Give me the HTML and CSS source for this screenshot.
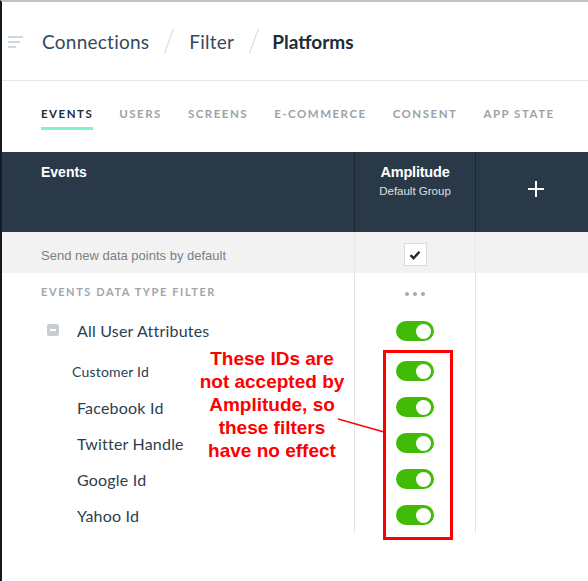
FILE: index.html
```html
<!DOCTYPE html>
<html>
<head>
<meta charset="utf-8">
<link rel="stylesheet" href="styles.css">
</head>
<body>
<div class="page">
  <header class="topbar">
    <svg class="menu" width="16" height="12" viewBox="0 0 16 12"><path d="M0 1h15M0 6h12M0 11h8" stroke="#c5cacf" stroke-width="1.6" fill="none"/></svg>
    <nav class="crumbs">
      <span class="crumb">Connections</span>
      <svg class="sep" width="10" height="26" viewBox="0 0 10 26"><path d="M9.5 0.5L0.5 25.5" stroke="#d2d6da" stroke-width="1" fill="none"/></svg>
      <span class="crumb">Filter</span>
      <svg class="sep" width="10" height="26" viewBox="0 0 10 26"><path d="M9.5 0.5L0.5 25.5" stroke="#d2d6da" stroke-width="1" fill="none"/></svg>
      <span class="crumb current">Platforms</span>
    </nav>
  </header>

  <div class="tabs">
    <span class="tab active">EVENTS</span>
    <span class="tab">USERS</span>
    <span class="tab">SCREENS</span>
    <span class="tab">E-COMMERCE</span>
    <span class="tab">CONSENT</span>
    <span class="tab">APP STATE</span>
  </div>

  <div class="table">
    <div class="row head">
      <div class="c1 head-title">Events</div>
      <div class="c2 dest">
        <div class="dest-name">Amplitude</div>
        <div class="dest-group">Default Group</div>
      </div>
      <div class="c3 add">
        <svg width="18" height="18" viewBox="0 0 18 18"><path d="M9 1v16M1 9h16" stroke="#fff" stroke-width="2" fill="none"/></svg>
      </div>
    </div>

    <div class="row defaults">
      <div class="c1 default-label">Send new data points by default</div>
      <div class="c2 center">
        <span class="checkbox"><svg width="12" height="10" viewBox="0 0 12 10"><path d="M1.5 5.2l3 3 6-6.4" stroke="#1d2b3a" stroke-width="2.4" fill="none"/></svg></span>
      </div>
      <div class="c3"></div>
    </div>

    <div class="row filter-row">
      <div class="c1 filter-label">EVENTS DATA TYPE FILTER</div>
      <div class="c2 center"><span class="dots"><i></i><i></i><i></i></span></div>
      <div class="c3"></div>
    </div>

    <div class="row attr all">
      <div class="c1 attr-name group"><span class="minus"></span>All User Attributes</div>
      <div class="c2 center"><span class="toggle"></span></div>
      <div class="c3"></div>
    </div>
    <div class="row attr">
      <div class="c1 attr-name small">Customer Id</div>
      <div class="c2 center"><span class="toggle"></span></div>
      <div class="c3"></div>
    </div>
    <div class="row attr">
      <div class="c1 attr-name">Facebook Id</div>
      <div class="c2 center"><span class="toggle"></span></div>
      <div class="c3"></div>
    </div>
    <div class="row attr">
      <div class="c1 attr-name">Twitter Handle</div>
      <div class="c2 center"><span class="toggle"></span></div>
      <div class="c3"></div>
    </div>
    <div class="row attr">
      <div class="c1 attr-name">Google Id</div>
      <div class="c2 center"><span class="toggle"></span></div>
      <div class="c3"></div>
    </div>
    <div class="row attr">
      <div class="c1 attr-name">Yahoo Id</div>
      <div class="c2 center"><span class="toggle"></span></div>
      <div class="c3"></div>
    </div>
  </div>

  <div class="note">These IDs are<br>not accepted by<br>Amplitude, so<br>these filters<br>have no effect</div>
  <svg class="pointer" width="50" height="16" viewBox="0 0 50 16"><path d="M0 1L46 14" stroke="#ff0000" stroke-width="1.5" fill="none"/></svg>
  <div class="callout"></div>
</div>
</body>
</html>
```

FILE: styles.css
```css
html, body {
  margin: 0;
  padding: 0;
  background: #fff;
}

.page {
  position: relative;
  box-sizing: border-box;
  width: 588px;
  height: 581px;
  border-top: 2px solid #c2c2c2;
  border-left: 2px solid #121a22;
  font-family: Lato, "Liberation Sans", sans-serif;
  color: #2c3e50;
  overflow: hidden;
}

.topbar {
  height: 79px;
  box-sizing: border-box;
  border-bottom: 1px solid #e6e6e6;
  display: flex;
  align-items: center;
  padding-left: 6px;
}

.menu {
  margin-right: 18px;
  margin-top: 2px;
}

.crumbs {
  display: flex;
  align-items: center;
}

.crumb {
  font-size: 19px;
  color: #34495e;
  letter-spacing: 0.25px;
}

.crumb.current {
  font-weight: 700;
  color: #1d2b3a;
  letter-spacing: 0;
}

.sep {
  margin: 0 15px;
}

.sep + .crumb.current {
  margin-left: -2px;
}

.tabs {
  height: 71px;
  box-sizing: border-box;
  display: flex;
  gap: 26px;
  padding-left: 39px;
  padding-top: 26px;
}

.tab {
  font-size: 11.5px;
  font-weight: 700;
  letter-spacing: 1.5px;
  color: #9ba2a9;
  height: 20px;
  box-sizing: border-box;
}

.tab.active {
  color: #1d2b3a;
  border-bottom: 3px solid #7ff2d3;
  height: 23px;
}

.table {
  display: flex;
  flex-direction: column;
}

.row {
  display: grid;
  grid-template-columns: 352px 121px 1fr;
}

.c2, .c3 {
  border-left: 1px solid #e4e4e4;
}

.center {
  display: flex;
  align-items: center;
  justify-content: center;
}

.row.head {
  height: 80px;
  background: #2a3947;
  color: #fff;
}

.row.head .c2, .row.head .c3 {
  border-left-color: #1a2835;
}

.head-title {
  font-family: "Liberation Sans", Arial, sans-serif;
  font-weight: 700;
  font-size: 14px;
  padding: 12px 0 0 39px;
}

.dest {
  text-align: center;
  padding-top: 12px;
  font-family: "Liberation Sans", Arial, sans-serif;
}

.dest-name {
  font-weight: 700;
  font-size: 14.5px;
  letter-spacing: -0.2px;
}

.dest-group {
  font-size: 11.5px;
  color: #dde2e6;
  margin-top: 5px;
}

.add {
  display: flex;
  justify-content: center;
  align-items: center;
  padding-left: 7px;
  padding-bottom: 6px;
}

.row.defaults {
  height: 41px;
  background: #f2f2f2;
}

.row.defaults .c2, .row.defaults .c3 {
  border-left-color: #e8e8e8;
}

.default-label {
  font-family: "Liberation Sans", Arial, sans-serif;
  font-size: 13px;
  color: #7a7f85;
  padding-left: 39px;
  display: flex;
  align-items: center;
  padding-top: 5px;
}

.checkbox {
  width: 21px;
  height: 21px;
  background: #fff;
  border: 1px solid #dcdcdc;
  display: flex;
  align-items: center;
  justify-content: center;
  margin-top: 4px;
}

.row.filter-row {
  height: 38px;
}

.filter-label {
  font-size: 11px;
  font-weight: 700;
  letter-spacing: 1.6px;
  color: #a0a6ac;
  padding-left: 39px;
  display: flex;
  align-items: center;
  padding-bottom: 1px;
}

.dots {
  display: flex;
  gap: 4px;
  margin-top: 4px;
}

.dots i {
  width: 4px;
  height: 4px;
  border-radius: 50%;
  background: #a3a9ae;
}

.row.attr {
  height: 36px;
}

.row.attr.all {
  height: 42px;
}

.attr-name {
  display: flex;
  align-items: center;
  font-size: 16px;
  letter-spacing: 0.2px;
  color: #2c3e50;
  padding-left: 75px;
  padding-top: 1px;
}

.attr-name.small {
  font-size: 14px;
  padding-left: 70px;
}

.attr-name.group {
  padding-left: 45px;
  padding-top: 0;
  padding-bottom: 4px;
}

.minus {
  position: relative;
  width: 12px;
  height: 12px;
  border-radius: 2px;
  background: #c9cdd1;
  margin-right: 18px;
}

.minus::after {
  content: "";
  position: absolute;
  left: 3px;
  top: 5px;
  width: 6px;
  height: 2px;
  background: #fff;
}

.toggle {
  position: relative;
  width: 38px;
  height: 20px;
  border-radius: 10px;
  background: #40bc06;
}

.row.all .toggle {
  margin-bottom: 2px;
}

.toggle::after {
  content: "";
  position: absolute;
  right: 3px;
  top: 2.5px;
  width: 15px;
  height: 15px;
  border-radius: 50%;
  background: #fff;
}

.note {
  position: absolute;
  left: 168px;
  top: 345px;
  width: 204px;
  text-align: center;
  font-family: "Liberation Sans", Arial, sans-serif;
  font-weight: 700;
  font-size: 19px;
  line-height: 23px;
  color: #ff0000;
}

.pointer {
  position: absolute;
  left: 336px;
  top: 416px;
}

.callout {
  position: absolute;
  left: 381px;
  top: 348px;
  width: 64px;
  height: 184px;
  border: 3px solid #ff0000;
}
```
